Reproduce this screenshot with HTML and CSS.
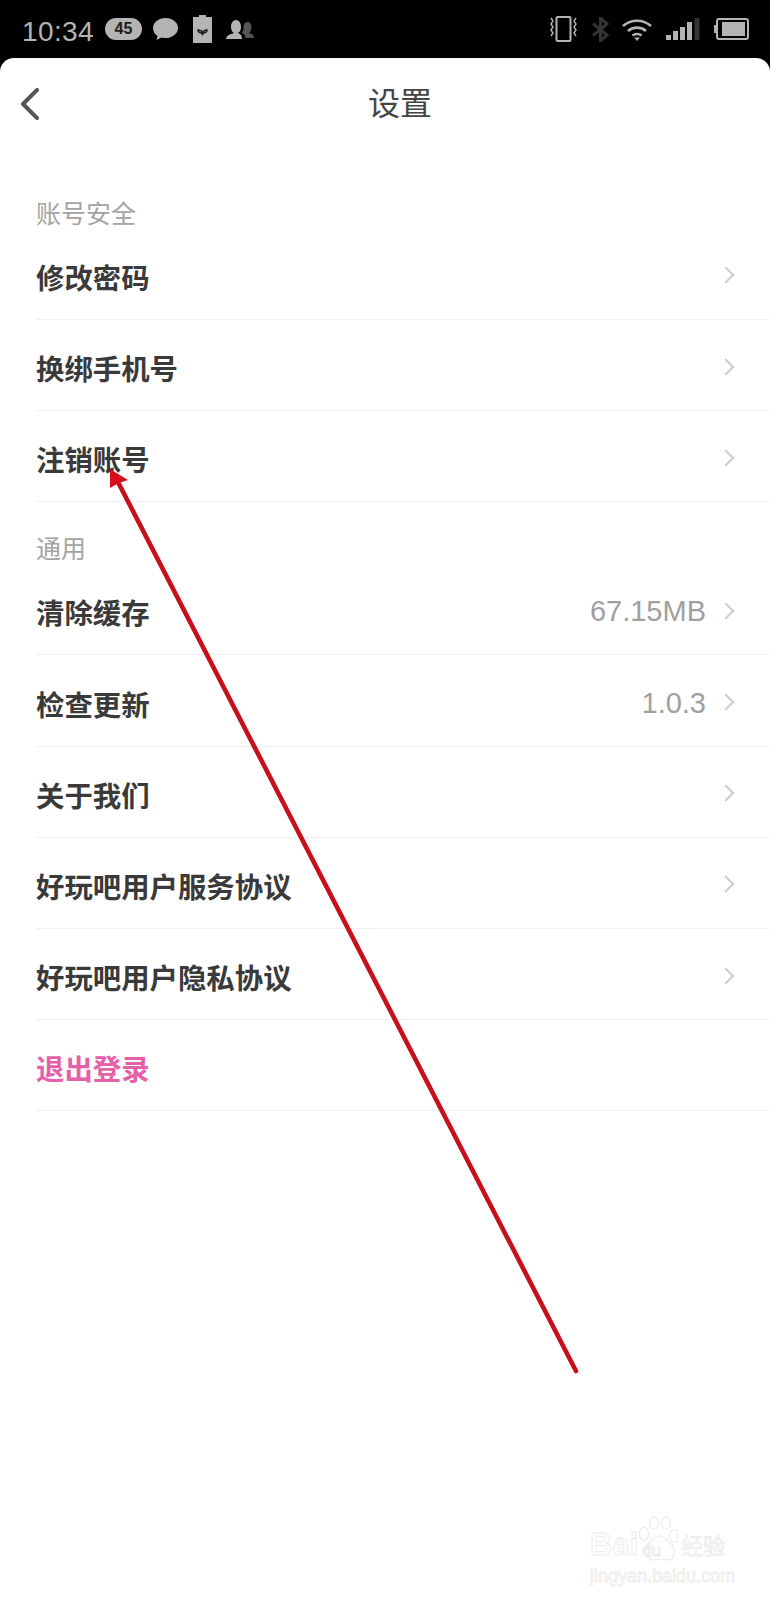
FILE: index.html
```html
<!DOCTYPE html>
<html lang="zh-CN">
<head>
    <meta charset="UTF-8">
    <meta name="viewport" content="width=device-width, initial-scale=1.0">
    <title>设置</title>
    <link rel="stylesheet" href="styles.css">
</head>
<body>
    <div class="status-bar">
        <div class="status-left">
            <span class="time">10:34</span>
            <span class="badge">45</span>
            <svg class="icon-bubble" viewBox="0 0 27 24"><path d="M13.500 1C6.500 1 1 5.500 1 11c0 3.500 1.800 6.300 4.500 8l-1 4 5-2.500c1.300.4 2.700.6 4 .6 7 0 12.500-4.600 12.500-10.100S20.500 1 13.500 1z" fill="#b4b4b4"/></svg>
            <svg class="icon-leaf" viewBox="0 0 19 28"><path d="M6 0h7v2h6v26H0V2h6z" fill="#b4b4b4"/><path d="M9.500 20.500V18M9.500 18c-.5-2-2.500-3-4.500-3 0 2 2 3.500 4.500 3zM9.500 18c.5-2 2.500-3 4.500-3 0 2-2 3.500-4.500 3z" fill="none" stroke="#1c1c1c" stroke-width="1.600"/></svg>
            <svg class="icon-people" viewBox="0 0 28 19"><path d="M16 19c0-3-1-5-4-6 2-1 3-3 3-6 0-4-2-7-5-7S5 3 5 7c0 3 1 5 3 6-4 1-8 3-8 6z" fill="#b4b4b4"/><path d="M28 18c0-3-2-4-5-5 1.500-1 2.500-3 2.500-5.500 0-3.500-1.500-5.500-4-5.500-2 0-3.500 1.500-4 4 .5 3-.5 5.500-2 7 2.500 1 4 2.500 4 5z" fill="#555"/></svg>
        </div>
        <div class="status-right">
            <svg class="icon-vibrate" viewBox="0 0 29 26"><rect x="7.500" y="1" width="14" height="24" rx="1" fill="none" stroke="#b4b4b4" stroke-width="2"/><path d="M2 2l2 3-2 3 2 3-2 3 2 3-2 3M27 2l-2 3 2 3-2 3 2 3-2 3 2 3" fill="none" stroke="#b4b4b4" stroke-width="1.400"/></svg>
            <svg class="icon-bt" viewBox="0 0 17 25"><path d="M1 6.500l14 11.500-6.500 6V1L15 7 1 18.500" fill="none" stroke="#343434" stroke-width="3"/></svg>
            <svg class="icon-wifi" viewBox="0 0 30 23"><path d="M1 8c8-7 20-7 28 0M6 13c5-4.500 13-4.500 18 0M10.500 17.500c2.500-2 6.500-2 9 0" fill="none" stroke="#b4b4b4" stroke-width="2.600"/><path d="M15 23l-3-3.500h6z" fill="#b4b4b4"/></svg>
            <svg class="icon-signal" viewBox="0 0 34 22"><rect x="0" y="17" width="5" height="5" fill="#b4b4b4"/><rect x="7" y="13" width="5" height="9" fill="#b4b4b4"/><rect x="14" y="9" width="5" height="13" fill="#b4b4b4"/><rect x="21" y="4" width="5" height="18" fill="#b4b4b4"/><rect x="28.500" y="0" width="5" height="22" fill="#333"/></svg>
            <svg class="icon-battery" viewBox="0 0 36 22"><path d="M3 7H1v8h2z" fill="#b4b4b4"/><rect x="4" y="1" width="31" height="20" rx="2" fill="none" stroke="#b4b4b4" stroke-width="2"/><rect x="9" y="4" width="23" height="14" fill="#b4b4b4"/></svg>
        </div>
    </div>

    <div class="sheet">
        <div class="top-bar">
            <svg class="back" viewBox="0 0 20 32"><path d="M17 2L3 16l14 14" fill="none" stroke="#555" stroke-width="4" stroke-linecap="round" stroke-linejoin="round"/></svg>
            <h1 class="page-title">设置</h1>
        </div>

        <div class="section-title">账号安全</div>
        <div class="row"><span class="row-name">修改密码</span><span class="chevron"></span></div>
        <div class="row"><span class="row-name">换绑手机号</span><span class="chevron"></span></div>
        <div class="row"><span class="row-name">注销账号</span><span class="chevron"></span></div>

        <div class="section-title">通用</div>
        <div class="row"><span class="row-name">清除缓存</span><span class="row-value">67.15MB</span><span class="chevron"></span></div>
        <div class="row"><span class="row-name">检查更新</span><span class="row-value">1.0.3</span><span class="chevron"></span></div>
        <div class="row"><span class="row-name">关于我们</span><span class="chevron"></span></div>
        <div class="row"><span class="row-name">好玩吧用户服务协议</span><span class="chevron"></span></div>
        <div class="row"><span class="row-name">好玩吧用户隐私协议</span><span class="chevron"></span></div>
        <div class="row"><span class="row-name logout">退出登录</span></div>
    </div>

    <!-- red arrow drawn over the screenshot -->
    <svg class="arrow" viewBox="0 0 770 1600">
        <line x1="576" y1="1371" x2="119" y2="484" stroke="#c8101c" stroke-width="4.600" stroke-linecap="round"/>
        <path d="M110 469L128 480 119 483 110 488z" fill="#d5101c"/>
    </svg>

    <div class="watermark">
        <div class="wm-top">
            <span class="wm-bai">Bai</span>
            <svg class="wm-paw" viewBox="0 0 42 46">
                <g fill="#fefefe" stroke="#ebebeb" stroke-width="1.200">
                    <ellipse cx="6" cy="18" rx="4.500" ry="6.500"/>
                    <ellipse cx="16" cy="7" rx="4.500" ry="6"/>
                    <ellipse cx="28" cy="7" rx="4.500" ry="6"/>
                    <ellipse cx="36" cy="20" rx="4.500" ry="6.500"/>
                    <path d="M21 20c-5 0-7 5-11 8-4 4-3 16 6 16 3 0 3-1 6-1s4 1 7 1c9 0 9-11 4-16-4-3-6-8-12-8z"/>
                </g>
            </svg>
            <span class="wm-du">du</span>
            <span class="wm-cn">经验</span>
        </div>
        <div class="wm-url">jingyan.baidu.com</div>
    </div>
</body>
</html>
```

FILE: styles.css
```css
body {
    margin: 0;
    padding: 0;
    width: 770px;
    height: 1600px;
    overflow: hidden;
    position: relative;
    background-color: #000;
    font-family: "Liberation Sans", "Noto Sans CJK SC", sans-serif;
}

.status-bar {
    height: 58px;
    display: flex;
    justify-content: space-between;
    align-items: center;
    padding: 0 21px 0 22px;
    color: #b4b4b4;
}

.status-left,
.status-right {
    display: flex;
    align-items: center;
}

.time {
    font-size: 28px;
    line-height: 32px;
    letter-spacing: 0.4px;
    width: 83px;
    margin-top: 5px;
}

.badge {
    width: 37px;
    height: 22px;
    line-height: 22px;
    margin-top: -1px;
    border-radius: 11px;
    background-color: #b4b4b4;
    color: #1c1c1c;
    font-size: 16px;
    font-weight: bold;
    text-align: center;
}

.icon-bubble { width: 27px; height: 24px; margin-left: 10px; }
.icon-leaf { width: 19px; height: 28px; margin-left: 14px; }
.icon-people { width: 28px; height: 19px; margin-left: 14px; }
.icon-vibrate { width: 29px; height: 26px; }
.icon-bt { width: 17px; height: 25px; margin-left: 14px; }
.icon-wifi { width: 30px; height: 23px; margin-left: 13px; }
.icon-signal { width: 34px; height: 22px; margin-left: 14px; }
.icon-battery { width: 36px; height: 22px; margin-left: 13px; }

.sheet {
    height: 1542px;
    background-color: #fff;
    border-radius: 14px 14px 0 0;
}

.top-bar {
    height: 88px;
    margin-bottom: 21.100px;
    display: flex;
    align-items: center;
}

.back {
    width: 20px;
    height: 32px;
    margin-left: 20px;
    margin-top: 4px;
}

.page-title {
    margin: -2px 0 0 328px;
    font-size: 32px;
    font-weight: normal;
    color: #444;
}

.section-title {
    height: 61.8px;
    display: flex;
    align-items: flex-end;
    margin-left: 36px;
    font-size: 25px;
    line-height: 29px;
    color: #a3a3a3;
}

.row {
    box-sizing: border-box;
    height: 91.2px;
    margin-left: 36px;
    padding-top: 5px;
    display: flex;
    align-items: center;
    border-bottom: 1px solid #f1f1f1;
}

.row-name {
    flex: 1;
    font-size: 28.4px;
    font-weight: bold;
    color: #3a3a3a;
}

.logout {
    color: #e65fa9;
}

.row-value {
    font-size: 29px;
    color: #a0a0a0;
}

.chevron {
    box-sizing: border-box;
    width: 12px;
    height: 12px;
    margin: -2px 38px 0 14px;
    border-top: 2.500px solid #cdcdcd;
    border-right: 2.500px solid #cdcdcd;
    transform: rotate(45deg);
}

.arrow {
    position: absolute;
    left: 0;
    top: 0;
    width: 770px;
    height: 1600px;
}

.watermark {
    position: absolute;
    left: 590px;
    top: 1516px;
    width: 140px;
    color: #fdfdfd;
    -webkit-text-stroke: 0.8px #ebebeb;
}

.wm-top {
    position: relative;
    height: 46px;
    display: flex;
    align-items: flex-end;
}

.wm-bai {
    font-size: 31px;
    font-weight: bold;
    line-height: 34px;
    width: 48px;
}

.wm-paw {
    width: 42px;
    height: 46px;
}

.wm-du {
    position: absolute;
    left: 52px;
    top: 26px;
    font-size: 17px;
    line-height: 18px;
}

.wm-cn {
    font-size: 22px;
    line-height: 30px;
    margin-left: 1px;
    white-space: nowrap;
}

.wm-url {
    margin-top: 4px;
    font-size: 18px;
    line-height: 20px;
    white-space: nowrap;
}
```
